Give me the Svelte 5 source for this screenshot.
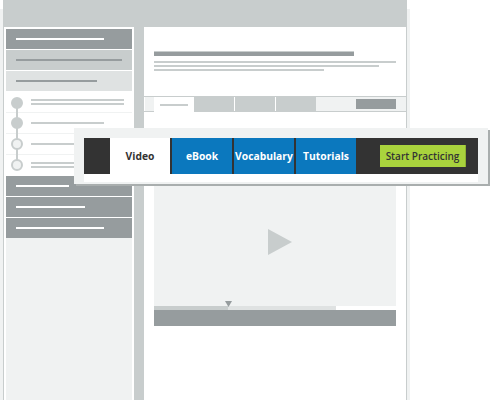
<script>
  const topRows = [
    { tone: "dark", line: 88 },
    { tone: "mid", line: 106 },
    { tone: "pale", line: 81 }
  ];
  const steps = [
    { lines: [93, 93], done: true },
    { lines: [73], done: true },
    { lines: [74], done: false },
    { lines: [74, 74], done: false }
  ];
  const bottomRows = [53, 69, 88];
  const tabs = ["eBook", "Vocabulary", "Tutorials"];
</script>

<div class="page">
  <div class="shell">
    <div class="frame">
      <div class="topbar"></div>
      <div class="body">
        <aside class="sidebar">
          {#each topRows as row}
            <div class="row {row.tone}"><span style="width: {row.line}px"></span></div>
          {/each}
          <div class="steps">
            {#each steps as step, i}
              <div class="step">
                {#if i < steps.length - 1}<i class="link"></i>{/if}
                <b class="dot" class:done={step.done}></b>
                <div class="lines">
                  {#each step.lines as w}
                    <span style="width: {w}px"></span>
                  {/each}
                </div>
              </div>
            {/each}
          </div>
          {#each bottomRows as w}
            <div class="row dark"><span style="width: {w}px"></span></div>
          {/each}
        </aside>

        <main class="content">
          <div class="heading">
            <div class="title"></div>
            <div class="sub" style="width: 242px"></div>
            <div class="sub" style="width: 225px"></div>
            <div class="sub" style="width: 170px"></div>
          </div>

          <div class="tabstrip">
            <div class="tab-lead"></div>
            <div class="tab-on"><span></span></div>
            <div class="tab-off"></div>
            <div class="tab-off"></div>
            <div class="tab-off"></div>
            <div class="tab-rest"><span></span></div>
          </div>

          <div class="player">
            <div class="screen">
              <svg class="play" width="24" height="26" viewBox="0 0 24 26"><path d="M0 0L24 13L0 26Z" fill="#c8cdcd" /></svg>
            </div>
            <div class="progress">
              <div class="played"></div>
              <div class="buffered"></div>
              <svg class="thumb" width="7" height="6" viewBox="0 0 7 6"><path d="M0 0H7L3.5 6Z" fill="#969c9e" /></svg>
            </div>
            <div class="controls"></div>
          </div>
        </main>
      </div>
    </div>
  </div>

  <div class="overlay">
    <nav class="nav">
      <div class="logo"></div>
      <div class="item active">Video</div>
      {#each tabs as t}
        <div class="item">{t}</div>
      {/each}
      <div class="cta-wrap"><div class="cta">Start Practicing</div></div>
    </nav>
  </div>
</div>

<style>
  :global(body) {
    margin: 0;
    background: #fff;
  }
  .page {
    position: relative;
    width: 490px;
    height: 400px;
    overflow: hidden;
    font-family: "Open Sans", sans-serif;
  }
  .shell {
    box-sizing: border-box;
    display: flex;
    align-items: flex-start;
    width: 410px;
    height: 391px;
    margin-top: 9px;
    padding: 0 2px 0 3px;
    background: #f0f2f2;
  }
  .frame {
    width: 404px;
    height: 400px;
    flex: none;
    margin-top: -9px;
    background: #fff;
  }
  .topbar {
    height: 27px;
    background: #c8cdcd;
  }
  .body {
    display: flex;
    height: 373px;
    border-left: 1px solid #c8cdcd;
    border-right: 1px solid #c8cdcd;
  }
  .sidebar {
    box-sizing: border-box;
    width: 130px;
    padding: 2px 2px 0;
    display: flex;
    flex-direction: column;
    gap: 1px;
    background: #fff;
  }
  .sidebar::after {
    content: "";
    flex: 1;
    background: #f0f2f2;
    margin-top: -1px;
  }
  .row {
    height: 20px;
    padding-left: 10px;
    display: flex;
    align-items: center;
  }
  .row span {
    height: 2px;
    display: block;
  }
  .dark { background: #969c9e; }
  .dark span { background: #fff; }
  .mid { background: #c8cdcd; }
  .mid span { background: #969c9e; }
  .pale { background: #dfe2e2; }
  .pale span { background: #969c9e; }
  .steps {
    display: flex;
    flex-direction: column;
  }
  .step {
    position: relative;
    box-sizing: border-box;
    height: 21px;
    padding-left: 25px;
    display: flex;
    align-items: center;
    border-bottom: 1px solid #f0f2f2;
  }
  .step:last-child { border-bottom: 0; height: 20px; }
  .dot {
    position: absolute;
    left: 5px;
    top: 4px;
    box-sizing: border-box;
    width: 12px;
    height: 12px;
    border-radius: 50%;
    border: 2px solid #c8cdcd;
    background: #f0f2f2;
  }
  .step:first-child .dot { top: 5px; }
  .dot.done { background: #c8cdcd; }
  .link {
    position: absolute;
    left: 10px;
    top: 10px;
    width: 2px;
    height: 21px;
    background: #c8cdcd;
  }
  .lines {
    display: flex;
    flex-direction: column;
    gap: 2px;
  }
  .lines span {
    height: 2px;
    background: #c8cdcd;
  }
  .content {
    flex: 1;
    border-left: 10px solid #c8cdcd;
    background: #fff;
  }
  .heading {
    box-sizing: border-box;
    height: 69px;
    padding: 24px 10px 0;
    display: flex;
    flex-direction: column;
    gap: 2px;
  }
  .title {
    width: 200px;
    height: 4px;
    margin-bottom: 3px;
    background: #969c9e;
    border-top: 1px solid #c8cdcd;
  }
  .sub {
    height: 2px;
    background: #c8cdcd;
  }
  .tabstrip {
    display: flex;
    height: 14px;
    border-top: 1px solid #c8cdcd;
    border-bottom: 1px solid #c8cdcd;
  }
  .tab-lead {
    width: 9px;
    margin-left: 1px;
    background: #f0f2f2;
  }
  .tab-on {
    width: 40px;
    margin-bottom: -1px;
    background: #fff;
    display: flex;
    align-items: center;
    padding-left: 6px;
    box-sizing: border-box;
  }
  .tab-on span {
    width: 28px;
    height: 2px;
    background: #c8cdcd;
  }
  .tab-off {
    width: 40px;
    background: #c8cdcd;
    border-right: 1px solid #fff;
  }
  .tab-off:nth-child(5) { border-right: 0; }
  .tab-rest {
    flex: 1;
    background: #f0f2f2;
    display: flex;
    align-items: center;
    justify-content: flex-end;
    padding-right: 10px;
  }
  .tab-rest span {
    width: 40px;
    height: 10px;
    background: #969c9e;
  }
  .player {
    margin: 0 10px;
    padding-top: 20px;
  }
  .screen {
    height: 173px;
    background: #f0f2f2;
    display: flex;
    align-items: center;
    justify-content: center;
  }
  .play {
    margin-top: 47px;
    margin-left: 10px;
  }
  .progress {
    position: relative;
    height: 5px;
    display: flex;
    box-sizing: border-box;
    border-top: 1px solid #f0f2f2;
  }
  .played {
    width: 74px;
    background: #c8cdcd;
  }
  .buffered {
    width: 108px;
    background: #dfe2e2;
  }
  .thumb {
    position: absolute;
    left: 71px;
    top: -5px;
  }
  .controls {
    height: 16px;
    background: #969c9e;
  }
  .overlay {
    position: absolute;
    left: 74px;
    top: 128px;
    box-sizing: border-box;
    width: 414px;
    height: 56px;
    padding: 10px 10px 0;
    background: #f0f2f2;
    box-shadow: 2px 2px 0 #a9aeae;
  }
  .nav {
    display: flex;
    height: 36px;
    gap: 2px;
    background: #333;
    box-shadow: 0 8px 0 #fff;
  }
  .logo {
    width: 26px;
    margin-right: -2px;
  }
  .item {
    width: 60px;
    display: flex;
    align-items: center;
    justify-content: center;
    background: #0b78be;
    color: #fff;
    font-size: 10.3px;
    font-weight: 700;
    white-space: nowrap;
  }
  .item.active {
    background: #fff;
    color: #333;
  }
  .cta-wrap {
    flex: 1;
    display: flex;
    align-items: center;
    justify-content: flex-end;
    padding-right: 12px;
    margin-left: -2px;
  }
  .cta {
    box-sizing: border-box;
    width: 86px;
    height: 22px;
    display: flex;
    align-items: center;
    justify-content: center;
    background: #a9d33d;
    border-right: 1px solid #8fb233;
    color: #333;
    font-size: 10px;
    font-weight: 600;
    white-space: nowrap;
  }
</style>
